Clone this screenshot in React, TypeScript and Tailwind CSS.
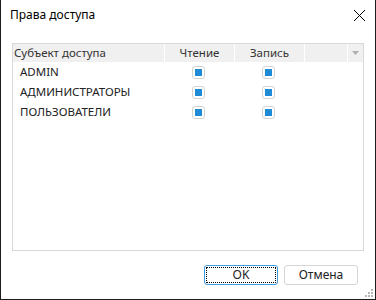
import React from "react";

const rows = ["ADMIN", "АДМИНИСТРАТОРЫ", "ПОЛЬЗОВАТЕЛИ"];

function Check() {
  return (
    <div className="w-[13px] h-[13px] rounded-[3px] border border-[#d4d4d4] bg-white flex items-center justify-center">
      <div className="w-[7px] h-[7px] bg-[#1f8ad6]" />
    </div>
  );
}

export default function App() {
  return (
    <div
      className="w-[376px] h-[300px] bg-white border-l border-r border-b border-[#1c1c1c] flex flex-col relative text-[#222]"
      style={{ fontFamily: '"Noto Sans", "Open Sans", sans-serif' }}
    >
      {/* title bar */}
      <div className="h-[30px] flex items-center justify-between pl-[9px] pr-[9px]">
        <span className="text-[12px] text-black">Права доступа</span>
        <svg width="13" height="13" viewBox="0 0 13 13" className="text-black">
          <path d="M1 1L12 12M12 1L1 12" stroke="currentColor" strokeWidth="1" />
        </svg>
      </div>

      {/* grid */}
      <div className="pl-[11px] pt-[13px]">
        <div className="w-[352px] h-[208px] border border-[#d9d9d9] bg-white text-[11.5px]">
          <div className="flex h-[18px] gap-px bg-white text-[#333]">
            <div className="w-[151px] bg-[#f0f0f0] pl-[1px] flex items-center">Субъект доступа</div>
            <div className="w-[69px] bg-[#f0f0f0] flex items-center justify-center">Чтение</div>
            <div className="w-[69px] bg-[#f0f0f0] flex items-center justify-center">Запись</div>
            <div className="w-[42px] bg-[#f0f0f0]" />
            <div className="w-[15px] bg-[#f0f0f0] flex items-center justify-center">
              <svg width="7" height="4" viewBox="0 0 7 4">
                <path d="M0 0H7L3.5 4Z" fill="#b0b0b0" />
              </svg>
            </div>
          </div>
          {rows.map((r) => (
            <div key={r} className="flex h-[20px] items-center gap-px">
              <div className="w-[151px] pl-[7px] text-[#222]">{r}</div>
              <div className="w-[69px] flex justify-center">
                <div className="-ml-[2px]">
                  <Check />
                </div>
              </div>
              <div className="w-[69px] flex justify-center">
                <div className="-ml-[2px]">
                  <Check />
                </div>
              </div>
            </div>
          ))}
        </div>
      </div>

      {/* footer */}
      <div className="flex justify-end gap-[6px] pr-[17px] pt-[14px] text-[12px]">
        <button className="w-[74px] h-[20px] rounded-[3px] border border-[#3d9be2] p-[1px]">
          <div className="w-full h-full border border-dotted border-black flex items-center justify-center text-[#222]">
            OK
          </div>
        </button>
        <button className="w-[74px] h-[20px] rounded-[3px] border border-[#d6d6d6] flex items-center justify-center text-[#222]">
          Отмена
        </button>
      </div>

      {/* resize grip */}
      <div className="absolute right-[2px] bottom-[2px] grid grid-cols-3 gap-[1px] w-[8px] h-[8px]">
        {[0, 1, 2, 3, 4, 5, 6, 7, 8].map((i) => (
          <div
            key={i}
            className={
              i === 0 || i === 1 || i === 3
                ? "w-[2px] h-[2px]"
                : "w-[2px] h-[2px] bg-[#b8b8b8]"
            }
          />
        ))}
      </div>
    </div>
  );
}
